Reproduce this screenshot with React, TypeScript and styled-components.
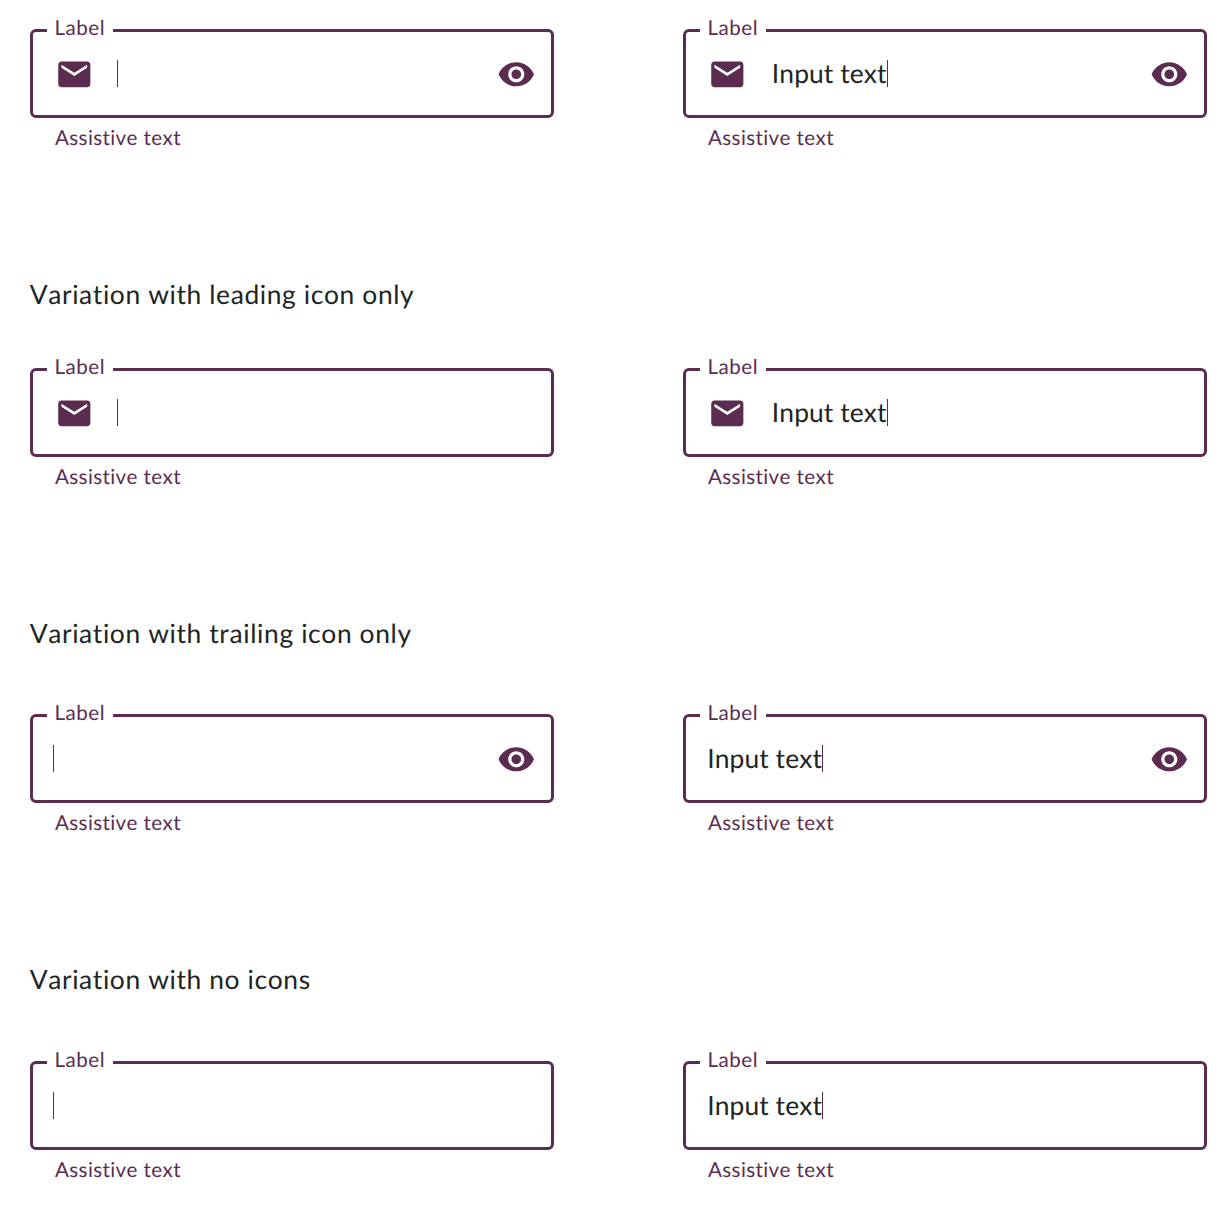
import React from "react";
import styled, { createGlobalStyle } from "styled-components";
import { MdEmail, MdVisibility } from "react-icons/md";

const plum = "#5b2c4f";
const ink = "#222424";

const GlobalStyle = createGlobalStyle`
  body {
    margin: 0;
    background: #fff;
    font-family: Lato, "Open Sans", sans-serif;
    text-rendering: geometricPrecision;
    font-kerning: none;
  }
`;

const Page = styled.main`
  box-sizing: border-box;
  width: 1228px;
  height: 1206px;
  padding: 29px 0 0 29.7px;
  overflow: hidden;
`;

const Title = styled.h2<{ $gap: number }>`
  margin: 126px 0 ${(p) => p.$gap + 1}px;
  color: ${ink};
  font-size: 26.4px;
  font-weight: 400;
  line-height: 32px;
  letter-spacing: 0.62px;
`;

const Row = styled.div`
  display: grid;
  grid-template-columns: 524px 524px;
  column-gap: 129px;
`;

const Box = styled.div`
  position: relative;
  box-sizing: border-box;
  display: flex;
  align-items: center;
  height: 89px;
  padding: 0 15.3px 0 20px;
  border: 3px solid ${plum};
  border-radius: 6px;
`;

const Label = styled.label`
  position: absolute;
  top: -18px;
  left: 14.3px;
  box-sizing: border-box;
  width: 66px;
  padding-left: 7.5px;
  background: #fff;
  color: ${plum};
  font-size: 20.6px;
  line-height: 29px;
  letter-spacing: 0.5px;
  white-space: nowrap;
`;

const Icon = styled.span<{ $trailing?: boolean }>`
  display: flex;
  flex: none;
  margin-top: 1px;
  margin-left: ${(p) => (p.$trailing ? "auto" : "2.3px")};
  margin-right: ${(p) => (p.$trailing ? "0" : "23.7px")};
  color: ${plum};
`;

const Value = styled.span`
  box-sizing: border-box;
  width: 115.2px;
  color: ${ink};
  font-size: 26.4px;
  line-height: 32px;
  letter-spacing: 0.08px;
  white-space: nowrap;
  margin: -2px 0 0 1.6px;
`;

const Caret = styled.span`
  flex: none;
  width: 1px;
  height: 27px;
  margin-top: -1px;
  background: ${plum};
`;

const Helper = styled.p`
  margin: 7px 0 1px 25.3px;
  color: ${plum};
  font-size: 20.6px;
  line-height: 26px;
  letter-spacing: 0.38px;
`;

type FieldProps = { leading?: boolean; trailing?: boolean; value?: string };

function Field({ leading, trailing, value }: FieldProps) {
  return (
    <div>
      <Box>
        <Label>Label</Label>
        {leading && (
          <Icon>
            <MdEmail size={38.6} />
          </Icon>
        )}
        {value && <Value>{value}</Value>}
        <Caret />
        {trailing && (
          <Icon $trailing>
            <MdVisibility size={38.6} />
          </Icon>
        )}
      </Box>
      <Helper>Assistive text</Helper>
    </div>
  );
}

const variations = [
  { leading: true, trailing: true },
  { title: "Variation with leading icon only", gap: 57, leading: true },
  { title: "Variation with trailing icon only", gap: 64, trailing: true },
  { title: "Variation with no icons", gap: 65 },
] as { title?: string; gap?: number; leading?: boolean; trailing?: boolean }[];

export default function App() {
  return (
    <Page>
      <GlobalStyle />
      {variations.map(({ title, gap = 0, leading, trailing }) => (
        <section key={title ?? "both"}>
          {title && <Title $gap={gap}>{title}</Title>}
          <Row>
            <Field leading={leading} trailing={trailing} />
            <Field leading={leading} trailing={trailing} value="Input text" />
          </Row>
        </section>
      ))}
    </Page>
  );
}
